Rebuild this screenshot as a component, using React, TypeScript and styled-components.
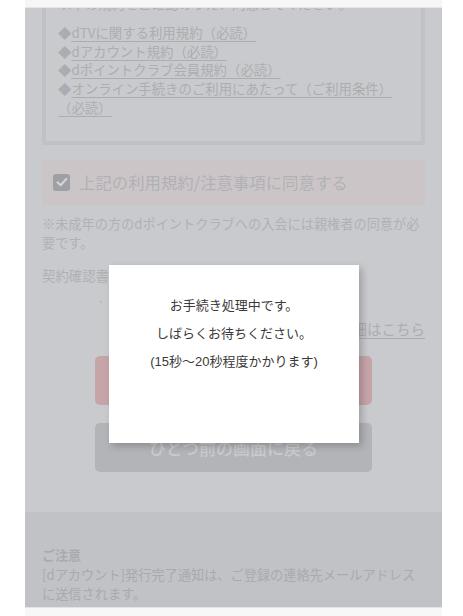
import React from "react";
import styled, { createGlobalStyle } from "styled-components";

const GlobalStyle = createGlobalStyle`
  html, body {
    margin: 0;
    padding: 0;
    background: #ffffff;
  }
  body {
    font-family: "Noto Sans CJK JP", "Noto Sans", sans-serif;
  }
`;

const Page = styled.div`
  width: 463px;
  height: 616px;
  overflow: hidden;
  background: #ffffff;
`;

const Column = styled.div`
  position: relative;
  width: 417px;
  height: 616px;
  margin-left: 25px;
  display: flex;
  flex-direction: column;
`;

const TopBar = styled.div`
  height: 7px;
  flex: none;
  background: #f6f6f6;
  border-bottom: 1px solid #e6e6e6;
`;

const Viewport = styled.div`
  height: 599px;
  flex: none;
  overflow: hidden;
  background: #c9cacd;
  color: #acadb0;
`;

const Inner = styled.div`
  padding: 0 17px;
  display: flex;
  flex-direction: column;
`;

const TermsBox = styled.div`
  margin-top: -30px;
  border: 4.5px solid #c0c1c4;
  padding: 12px 12px 24px;
  font-size: 13.4px;
  line-height: 18.8px;
`;

const Intro = styled.p`
  margin: 0 0 10px;
  white-space: nowrap;
  overflow: hidden;
`;

const TermsList = styled.ul`
  list-style: none;
  margin: 0;
  padding: 0;
`;

const TermItem = styled.li`
  margin: 0;
  &::before {
    content: "◆";
  }
`;

const GrayLink = styled.a`
  color: #acadb0;
  text-decoration: underline;
  text-underline-offset: 3px;
  text-decoration-thickness: 1px;
`;

const AgreeRow = styled.label`
  margin-top: 15px;
  height: 45px;
  display: flex;
  align-items: center;
  gap: 9px;
  padding-left: 11px;
  background: #ccc5c8;
  font-size: 16.4px;
  color: #b0b1b4;
`;

const CheckMark = styled.span`
  width: 17px;
  height: 17px;
  border-radius: 3px;
  background: #9fa0a3;
  display: flex;
  align-items: center;
  justify-content: center;
`;

const Note = styled.p`
  margin: 9px 0 0;
  font-size: 13.2px;
  line-height: 19px;
  color: #b0b1b4;
`;

const Confirm = styled.p`
  margin: 12px 0 0;
  font-size: 13.4px;
  line-height: 22px;
  color: #b0b1b4;
`;

const Indent = styled.span`
  display: block;
  padding-left: 57px;
`;

const LinkLine = styled.div`
  margin-top: 10px;
  text-align: right;
  font-size: 14.5px;
  line-height: 22px;
`;

const ButtonStack = styled.div`
  margin-top: 16px;
  display: flex;
  flex-direction: column;
  align-items: center;
  gap: 18px;
`;

const Button = styled.button<{ $tone: "red" | "gray" }>`
  width: 277px;
  height: 49px;
  border: none;
  border-radius: 5px;
  background: ${(p) => (p.$tone === "red" ? "#c6a5a9" : "#b3b4b7")};
  color: ${(p) => (p.$tone === "red" ? "#d6c4c6" : "#c9cacd")};
  font-family: "Noto Sans CJK JP", sans-serif;
  font-size: 17px;
  font-weight: 500;
  padding: 0;
`;

const Caution = styled.section`
  margin-top: 40px;
  background: #c1c2c5;
  padding: 33px 17px 20px;
  color: #a9aaad;
`;

const CautionTitle = styled.h3`
  margin: 0;
  font-size: 13px;
  line-height: 19px;
  font-weight: 700;
`;

const CautionText = styled.p`
  margin: 1px 0 0;
  font-size: 13.2px;
  line-height: 19px;
`;

const BottomBar = styled.div`
  flex: 1;
  background: #f7f7f7;
  border-top: 1px solid #e4e4e4;
`;

const Modal = styled.div`
  position: absolute;
  left: 84px;
  top: 265px;
  width: 250px;
  height: 178px;
  box-sizing: border-box;
  padding-top: 27px;
  background: #ffffff;
  box-shadow: 3px 3px 7px rgba(0, 0, 0, 0.22);
  text-align: center;
  color: #3a3a3a;
  font-family: "Liberation Sans", "Noto Sans CJK JP", sans-serif;
  font-size: 13px;
  line-height: 28px;
`;

const ModalLine = styled.p`
  margin: 0;
`;

const terms = [
  "dTVに関する利用規約（必読）",
  "dアカウント規約（必読）",
  "dポイントクラブ会員規約（必読）",
  "オンライン手続きのご利用にあたって（ご利用条件）（必読）",
];

export default function App() {
  return (
    <>
      <GlobalStyle />
      <Page>
        <Column>
          <TopBar />
          <Viewport>
            <Inner>
              <TermsBox>
                <Intro>以下の規約をご確認のうえ、同意してください。</Intro>
                <TermsList>
                  {terms.map((t) => (
                    <TermItem key={t}>
                      <GrayLink>{t}</GrayLink>
                    </TermItem>
                  ))}
                </TermsList>
              </TermsBox>
              <AgreeRow>
                <CheckMark>
                  <svg width="12" height="10" viewBox="0 0 12 10">
                    <path
                      d="M1.5 5.2 L4.6 8.2 L10.5 1.8"
                      fill="none"
                      stroke="#d4d5d7"
                      strokeWidth="2"
                      strokeLinecap="round"
                      strokeLinejoin="round"
                    />
                  </svg>
                </CheckMark>
                上記の利用規約/注意事項に同意する
              </AgreeRow>
              <Note>
                ※未成年の方のdポイントクラブへの入会には親権者の同意が必要です。
              </Note>
              <Confirm>
                契約確認書面は、お申込み完了後に送付されます。
                <Indent>.「契約内容のご確認」について</Indent>
              </Confirm>
              <LinkLine>
                <GrayLink>契約内容の詳細はこちら</GrayLink>
              </LinkLine>
              <ButtonStack>
                <Button $tone="red">同意して次へ</Button>
                <Button $tone="gray">ひとつ前の画面に戻る</Button>
              </ButtonStack>
            </Inner>
            <Caution>
              <CautionTitle>ご注意</CautionTitle>
              <CautionText>
                [dアカウント]発行完了通知は、ご登録の連絡先メールアドレスに送信されます。
              </CautionText>
              <CautionText>
                迷惑メール対策をされている場合は、受信設定をご確認ください。
              </CautionText>
            </Caution>
          </Viewport>
          <BottomBar />
          <Modal>
            <ModalLine>お手続き処理中です。</ModalLine>
            <ModalLine>しばらくお待ちください。</ModalLine>
            <ModalLine>(15秒〜20秒程度かかります)</ModalLine>
          </Modal>
        </Column>
      </Page>
    </>
  );
}
